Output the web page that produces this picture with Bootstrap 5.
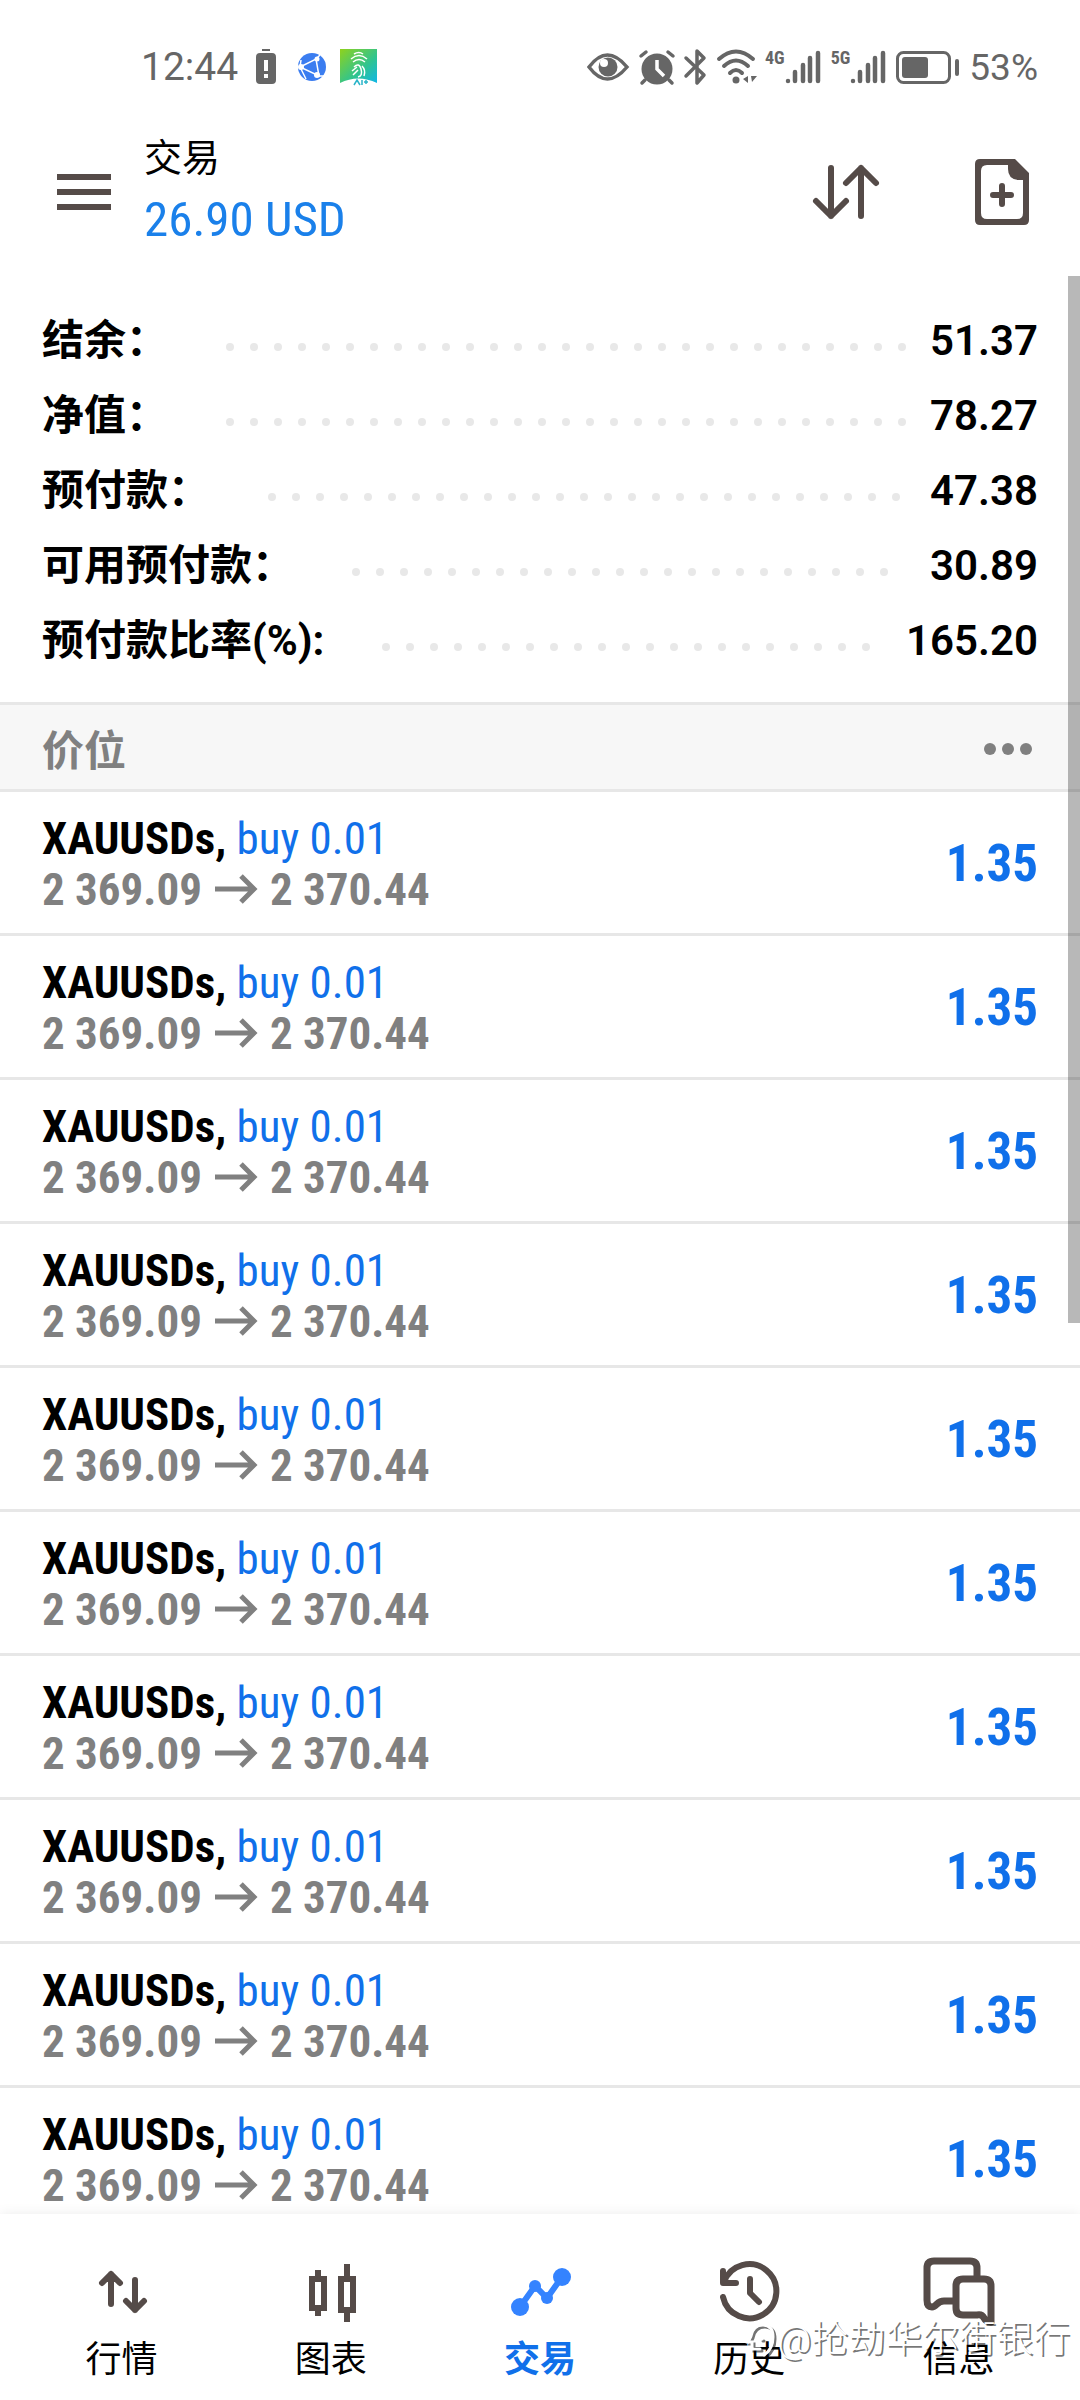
<!DOCTYPE html>
<html lang="zh-CN">
<head>
<meta charset="utf-8">
<meta name="viewport" content="width=device-width, initial-scale=1">
<title>交易</title>
<link href="https://cdn.jsdelivr.net/npm/bootstrap@5.3.0/dist/css/bootstrap.min.css" rel="stylesheet">
<style>
  :root { --ink: #554b48; --blue: #1070ea; --rule: #e7e7e7; --side: 42px; }
  body { font-family: Roboto, "Noto Sans CJK SC", sans-serif; color: #000; background: #fff; }
  svg { display: block; overflow: visible; flex: none; }
  .narrow { font-family: "Roboto Condensed", Roboto, "Noto Sans CJK SC", sans-serif; }
  .statusbar { height: 132px; padding: 2px var(--side) 0 141px; color: #666; font-size: 39px; line-height: 1; }
  .status-left { gap: 14px; }
  .status-right { gap: 10px; }
  .battery-text { font-size: 37px; }
  .net-tag { font-size: 18px; line-height: 16px; font-weight: 700; margin-bottom: 18px; }
  .topbar { height: 120px; padding: 0 51px 0 57px; gap: 33px; }
  .topbar .btn { color: var(--ink); border: 0; padding: 0; }
  .topbar .btn:last-child { margin-left: 63px; }
  .page-name { font-size: 38px; line-height: 50px; font-weight: 400; margin: 0 0 6px; }
  .profit-sum { font-size: 49px; line-height: 62px; color: #1a80ea; }
  .summary { padding: 51px var(--side) 24px; }
  .sum-row { font-size: 42px; line-height: 75px; font-weight: 700; white-space: nowrap; }
  .sum-row .amount { font-weight: 600; }
  .leader { flex: 1 1 0; min-width: 0; height: 8px; margin: 12px 6px 0 58px; }
  .leader i { width: 8px; height: 8px; margin-right: 16px; border-radius: 50%; background: #e8e8e8; flex: none; }
  .section-bar { height: 90px; padding: 3px 48px 0 var(--side); background: #f7f7f7; border: solid var(--rule); border-width: 3px 0; }
  .section-bar h2 { font-size: 42px; line-height: 60px; font-weight: 700; color: #808080; margin: 0; padding-top: 6px; }
  .section-bar .btn { color: #808080; border: 0; padding: 0; }
  .deal { height: 144px; padding: 2px var(--side) 0; border-bottom: 3px solid var(--rule); font-size: 45px; line-height: 51px; }
  .deal .side { color: var(--blue); }
  .deal .prices { color: #808080; gap: 13px; }
  .deal .profit { font-size: 51px; color: var(--blue); }
  .thumb { top: 276px; width: 12px; height: 1047px; background: rgba(0,0,0,.28); }
  .tabbar { height: 186px; padding: 42px 17px 0; background: #fff; box-shadow: 0 0 12px rgba(0,0,0,.08); z-index: 2; }
  .tabbar a { color: #000; font-size: 36px; line-height: 52px; text-decoration: none; }
  .tabbar svg { color: var(--ink); margin-bottom: 6px; }
  .tabbar a.active { color: var(--blue); font-weight: 700; }
  .tabbar a.active svg { color: #3483ff; }
  .stamp { right: 10px; bottom: 34px; z-index: 3; color: #fff; font-size: 37px; line-height: 52px; font-weight: 300; text-shadow: 2px 2px 0 rgba(0,0,0,.55); }
  .stamp svg { filter: drop-shadow(2px 2px 0 rgba(0,0,0,.55)); }
</style>
<script src="https://cdn.jsdelivr.net/npm/bootstrap@5.3.0/dist/js/bootstrap.bundle.min.js"></script>
</head>
<body class="vh-100 d-flex flex-column position-relative overflow-hidden">

<div class="statusbar d-flex align-items-center justify-content-between flex-shrink-0">
  <div class="status-left d-flex align-items-center">
    <span>12:44</span>
    <svg class="ms-1" width="20" height="36" viewBox="0 0 20 36"><path fill="#666" d="M6 0h8v2H6zM4 4h12q4 0 4 4v23q0 4-4 4H4q-4 0-4-4V8q0-4 4-4z"/><path stroke="#fff" stroke-width="4" d="M10 11v11M10 25v4"/></svg>
    <svg class="ms-2" width="28" height="28" viewBox="0 0 28 28"><circle cx="14" cy="14" r="14" fill="#3b7df0"/><path d="M2 14 18 6l3 17zM18 6l4-4M21 23l5 0M2 14l1-7M2 14l6 12" fill="none" stroke="#fff" stroke-width="1.500"/><g fill="#fff"><circle cx="3" cy="14" r="3"/><circle cx="19" cy="6" r="2.500"/><circle cx="19" cy="22" r="3"/></g></svg>
    <svg width="37" height="37" viewBox="0 0 37 37"><defs><linearGradient id="g" x1="0" y1="0" x2="1" y2="1"><stop offset="0" stop-color="#8fd21c"/><stop offset=".6" stop-color="#2fc490"/><stop offset="1" stop-color="#10b6e8"/></linearGradient></defs><path fill="url(#g)" d="M0 0h37v34Q18 25 0 34z"/><path d="M14 5q5-3 9 0M11 10q8-7 16 0M13 13q6-5 12 0M14 18q5-5 7 2t-3 8M12 22l5-4M13 26l5-5M22 17q4 4 2 10" fill="none" stroke="#fff" stroke-width="1.500"/><path d="M14 36l3-5 3 5M22 31v5M24 33h4M26 31v4" fill="none" stroke="#2bb5c9" stroke-width="1.500"/></svg>
  </div>
  <div class="status-right d-flex align-items-center">
    <svg width="42" height="28" viewBox="0 0 42 28"><path d="M2 14Q20-10 40 14 20 38 2 14z" fill="none" stroke="#666" stroke-width="3.500"/><circle cx="21" cy="14" r="9.500" fill="#666"/><circle cx="17" cy="10" r="4" fill="#fff"/></svg>
    <svg width="36" height="34" viewBox="0 0 36 34"><circle cx="18" cy="19" r="15.500" fill="#666"/><path d="M2 6l5-4M34 6l-5-4M6 30l-3 3M30 30l3 3" stroke="#666" stroke-width="3.500" stroke-linecap="round"/><path d="M18 10v9l7 7" fill="none" stroke="#fff" stroke-width="3.500"/></svg>
    <svg width="22" height="36" viewBox="0 0 22 36"><path d="M1 9l18 17-7 8V2l7 7L1 27" fill="none" stroke="#666" stroke-width="3.500" stroke-linejoin="round" stroke-linecap="round"/></svg>
    <svg width="38" height="34" viewBox="0 0 38 34"><path d="M2 9q17-15 34 0M7 16q12-11 24 0M13 23q6-6 12 0" fill="none" stroke="#666" stroke-width="4" stroke-linecap="round"/><circle cx="19" cy="30" r="3.500" fill="#666"/><path fill="#666" d="M31 26v7l-5-4zM34 26h6l-5 6z"/></svg>
    <div class="d-flex align-items-center"><span class="net-tag narrow">4G</span>
    <svg width="36" height="34" viewBox="0 0 36 34"><path d="M3 31v0M10 22v9M18 15v16M25 8v23M33 3v28" stroke="#666" stroke-width="4.500" stroke-linecap="round"/></svg></div>
    <div class="d-flex align-items-center"><span class="net-tag narrow">5G</span>
    <svg width="36" height="34" viewBox="0 0 36 34"><path d="M3 31v0M10 22v9M18 15v16M25 8v23M33 3v28" stroke="#666" stroke-width="4.500" stroke-linecap="round"/></svg></div>
    <svg width="63" height="34" viewBox="0 0 63 34"><rect x="1.500" y="2.500" width="52" height="30" rx="6" fill="none" stroke="#666" stroke-width="3"/><rect x="6" y="7" width="26" height="21" rx="3" fill="#666"/><path d="M61 11v13" stroke="#666" stroke-width="4" stroke-linecap="round"/></svg>
    <span class="battery-text">53%</span>
  </div>
</div>

<header class="topbar d-flex align-items-center flex-shrink-0">
  <button class="btn" type="button" aria-label="菜单"><svg width="54" height="36" viewBox="0 0 54 36"><path fill="currentColor" d="M0 0h54v6H0zM0 15h54v6H0zM0 30h54v6H0z"/></svg></button>
  <div class="flex-grow-1">
    <h1 class="page-name">交易</h1>
    <div class="profit-sum narrow">26.90 USD</div>
  </div>
  <button class="btn" type="button" aria-label="排序"><svg width="66" height="54" viewBox="0 0 66 54"><path d="M18 3v48M3 36l15 15 15-15M48 51V3M33 18 48 3l15 15" fill="none" stroke="currentColor" stroke-width="6" stroke-linecap="round" stroke-linejoin="round"/></svg></button>
  <button class="btn" type="button" aria-label="新订单"><svg width="54" height="66" viewBox="0 0 54 66"><path fill="currentColor" fill-rule="evenodd" d="M5 0h35l14 14v47q0 5-5 5H5q-5 0-5-5V5q0-5 5-5zm7 6q-6 0-6 6v42q0 6 6 6h30q6 0 6-6V21h-5Q33 20 33 10V6z"/><path d="M27 27v18M18 36h18" stroke="currentColor" stroke-width="6" stroke-linecap="round"/></svg></button>
</header>

<main class="flex-grow-1 overflow-hidden">
  <section class="summary" id="summary"></section>
  <div class="section-bar d-flex align-items-center justify-content-between">
    <h2>价位</h2>
    <button class="btn" type="button" aria-label="更多"><svg width="48" height="12" viewBox="0 0 48 12" fill="currentColor"><circle cx="6" cy="6" r="6"/><circle cx="24" cy="6" r="6"/><circle cx="42" cy="6" r="6"/></svg></button>
  </div>
  <ul class="list-unstyled mb-0 narrow" id="deals"></ul>
</main>
<div class="thumb position-absolute end-0"></div>

<nav class="tabbar d-flex flex-shrink-0">
  <a class="d-flex flex-column align-items-center flex-fill w-100" href="#"><svg width="72" height="72" viewBox="0 0 72 72"><path d="M25 48V18M16 27l9-9 9 9M49 24v30M40 45l9 9 9-9" fill="none" stroke="currentColor" stroke-width="6" stroke-linecap="round" stroke-linejoin="round"/></svg>行情</a>
  <a class="d-flex flex-column align-items-center flex-fill w-100" href="#"><svg width="72" height="72" viewBox="0 0 72 72"><path d="M17 23h12v29H17zM23 14v6M23 55v5M46 23h12v31H46zM52 8v12M52 57v9" fill="none" stroke="currentColor" stroke-width="6"/></svg>图表</a>
  <a class="active d-flex flex-column align-items-center flex-fill w-100" href="#" aria-current="page"><svg width="72" height="72" viewBox="0 0 72 72"><path d="M16 51l15-21 12 12 15-21" fill="none" stroke="currentColor" stroke-width="6"/><g fill="currentColor"><circle cx="16" cy="51" r="9"/><circle cx="31" cy="30" r="6"/><circle cx="43" cy="42" r="6"/><circle cx="58" cy="21" r="9"/></g></svg>交易</a>
  <a class="d-flex flex-column align-items-center flex-fill w-100" href="#"><svg width="72" height="72" viewBox="0 0 72 72"><path d="M10 15v12h13M11 26a27 27 0 1 1-1 15M37 23v14l9 9" fill="none" stroke="currentColor" stroke-width="6" stroke-linecap="round" stroke-linejoin="round"/></svg>历史</a>
  <a class="d-flex flex-column align-items-center flex-fill w-100" href="#"><svg width="72" height="72" viewBox="0 0 72 72"><path d="M55 22V12q0-7-7-7H12q-7 0-7 7v32q0 7 5 7 2 0 5-3t7-3h11M41 23h21q7 0 7 7v36q-5 0-7-4t-7-3H41q-7 0-7-7V30q0-7 7-7z" fill="none" stroke="currentColor" stroke-width="7" stroke-linejoin="round"/></svg>信息</a>
</nav>

<div class="stamp position-absolute d-flex align-items-center">
  <svg width="32" height="36" viewBox="0 0 32 36"><path d="M6 14Q8 3 18 3q10 0 10 12t-9 18M6 14l-3 6h4v7h8M16 17h1" fill="none" stroke="#fff" stroke-width="3" stroke-linecap="round"/></svg>
  <span>@抢劫华尔街银行</span>
</div>

<script>
  const dots = '<i></i>'.repeat(60);
  const totals = [['结余：', '51.37'], ['净值：', '78.27'], ['预付款：', '47.38'], ['可用预付款：', '30.89'], ['预付款比率(%):', '165.20']];
  document.getElementById('summary').innerHTML = totals.map(([k, v]) =>
    `<div class="sum-row d-flex align-items-center"><span>${k}</span><div class="leader d-flex flex-wrap overflow-hidden">${dots}</div><span class="amount">${v}</span></div>`).join('');
  const deal = `<li class="deal d-flex align-items-center justify-content-between">
    <div><div><b>XAUUSDs,</b> <span class="side">buy 0.01</span></div>
    <div class="prices fw-bold d-flex align-items-center">2 369.09<svg width="42" height="30" viewBox="0 0 42 30"><path d="M0 15h39M26 2l13 13-13 13" fill="none" stroke="currentColor" stroke-width="5"/></svg>2 370.44</div></div>
    <b class="profit">1.35</b></li>`;
  document.getElementById('deals').innerHTML = deal.repeat(10);
</script>
</body>
</html>
